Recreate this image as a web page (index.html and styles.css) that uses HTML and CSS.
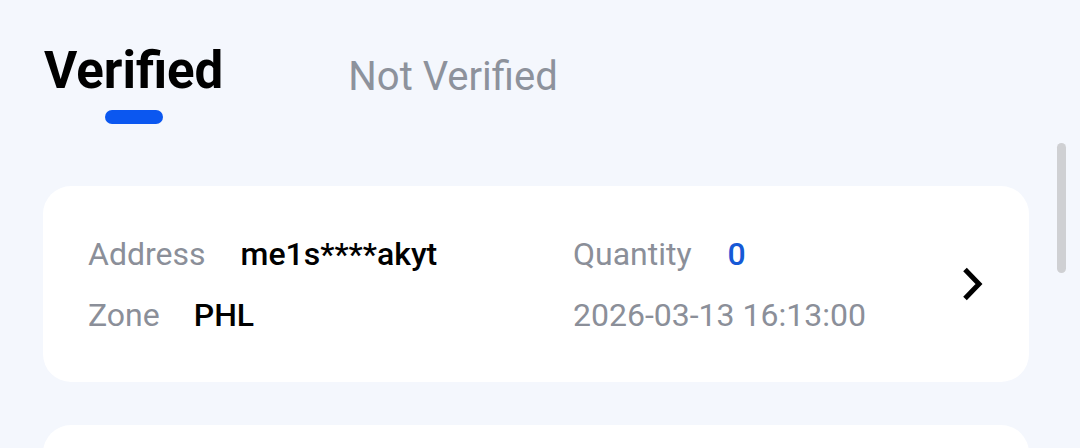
FILE: index.html
```html
<!DOCTYPE html>
<html>
<head>
<meta charset="utf-8">
<link rel="stylesheet" href="styles.css">
</head>
<body>
<div class="page">
  <div class="tabs">
    <div class="tab active">Verified<span class="indicator"></span></div>
    <div class="tab">Not Verified</div>
  </div>
  <div class="list">
    <div class="card">
      <div class="cols">
        <div class="col left">
          <div class="row"><span class="label">Address</span><span class="value">me1s****akyt</span></div>
          <div class="row"><span class="label">Zone</span><span class="value">PHL</span></div>
        </div>
        <div class="col right">
          <div class="row"><span class="label">Quantity</span><span class="value blue">0</span></div>
          <div class="row"><span class="label">2026-03-13 16:13:00</span></div>
        </div>
      </div>
      <svg class="chev" width="24" height="36" viewBox="0 0 24 36"><path d="M6 3.5 L20 18 L6 32.5" fill="none" stroke="#000" stroke-width="5" stroke-linecap="butt" stroke-linejoin="miter"/></svg>
    </div>
    <div class="card"></div>
  </div>
  <div class="scrollbar"></div>
</div>
</body>
</html>
```
FILE: styles.css
```css
html, body {
  margin: 0;
  padding: 0;
  background: #f4f7fd;
  font-family: Roboto, "Liberation Sans", sans-serif;
  overflow: hidden;
}
.page {
  position: relative;
  width: 1080px;
  height: 448px;
}
.tabs {
  display: flex;
  align-items: flex-end;
  padding: 41px 0 0 44px;
  height: 97px;
  box-sizing: border-box;
}
.tab {
  position: relative;
  font-size: 40px;
  color: #8d929c;
  line-height: 1;
}
.tab.active {
  font-size: 51px;
  font-weight: 700;
  color: #000;
  margin-right: 125px;
  margin-bottom: 1px;
}
.indicator {
  position: absolute;
  left: 50%;
  top: 65px;
  width: 58px;
  height: 14px;
  margin-left: -29px;
  border-radius: 7px;
  background: #0b57f0;
}
.list {
  padding: 89px 51px 0 43px;
  display: flex;
  flex-direction: column;
  gap: 43px;
}
.card {
  background: #fff;
  border-radius: 28px;
  height: 196px;
  display: flex;
  align-items: center;
  padding: 0 46px 0 45px;
  box-sizing: border-box;
}
.cols {
  flex: 1;
  display: flex;
}
.col {
  display: flex;
  flex-direction: column;
  gap: 25px;
}
.col.left { width: 485px; }
.row {
  display: flex;
  font-size: 32px;
  line-height: 36px;
}
.label {
  color: #8b8f99;
  margin-right: 35px;
}
.left .row:nth-child(2) .label { margin-right: 34px; }
.right .row:nth-child(1) .label { margin-right: 36px; }
.value {
  color: #000;
  font-weight: 500;
}
.value.blue {
  color: #1659d6;
}
.chev {
  display: block;
}
.scrollbar {
  position: absolute;
  left: 1057px;
  top: 143px;
  width: 9px;
  height: 130px;
  border-radius: 4.5px;
  background: #cfd0d3;
}
```
